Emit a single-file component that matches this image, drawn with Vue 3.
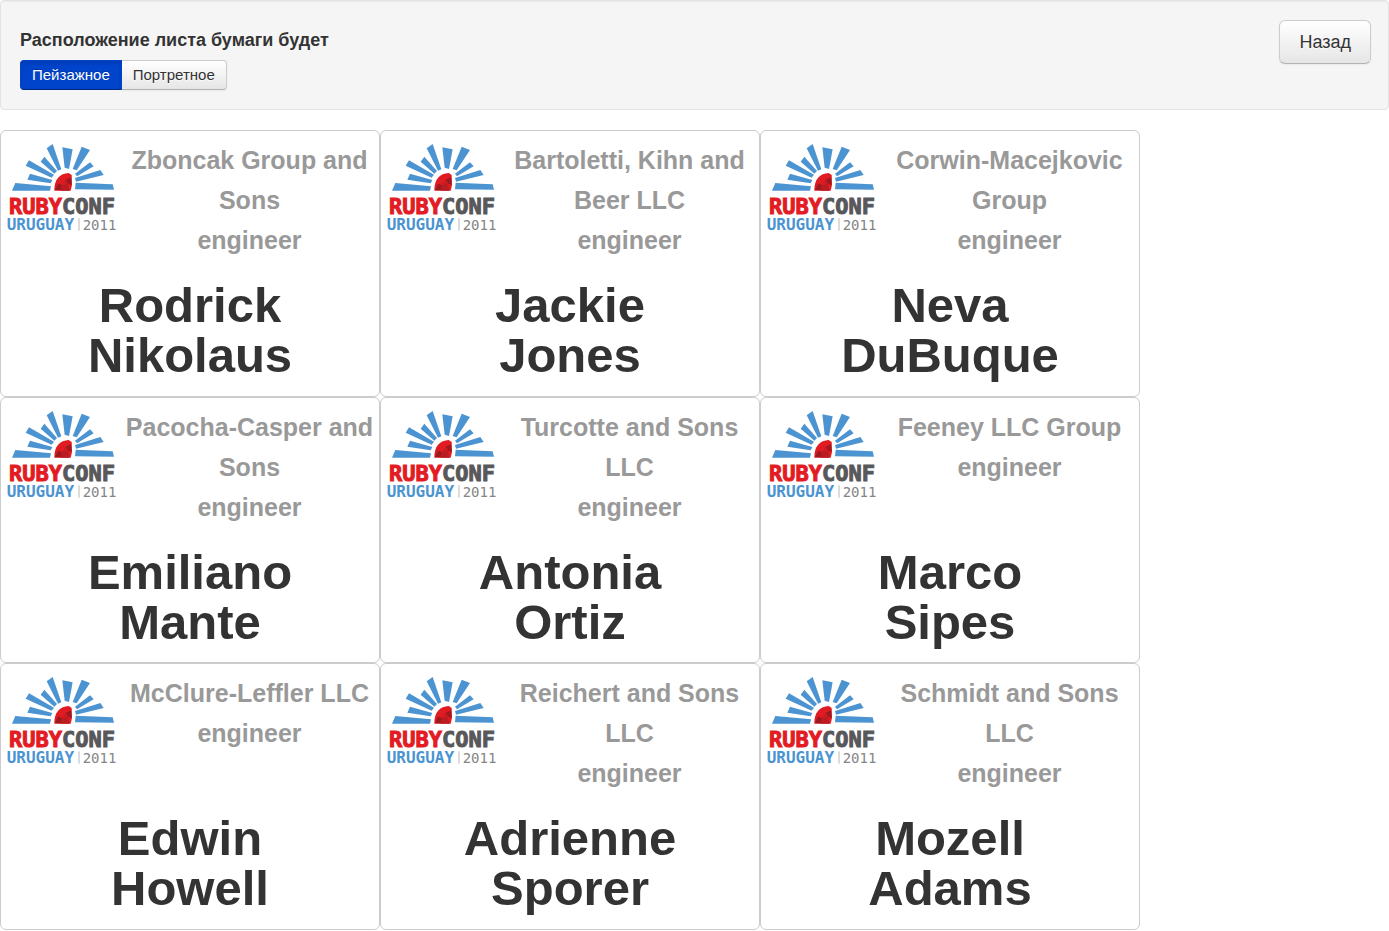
<script setup>
import { ref } from 'vue'

const orientation = ref('landscape')

const options = [
  { id: 'landscape', label: 'Пейзажное' },
  { id: 'portrait', label: 'Портретное' },
]

const badges = [
  { first: 'Rodrick', last: 'Nikolaus', company: 'Zboncak Group and Sons' },
  { first: 'Jackie', last: 'Jones', company: 'Bartoletti, Kihn and Beer LLC' },
  { first: 'Neva', last: 'DuBuque', company: 'Corwin-Macejkovic Group' },
  { first: 'Emiliano', last: 'Mante', company: 'Pacocha-Casper and Sons' },
  { first: 'Antonia', last: 'Ortiz', company: 'Turcotte and Sons LLC' },
  { first: 'Marco', last: 'Sipes', company: 'Feeney LLC Group' },
  { first: 'Edwin', last: 'Howell', company: 'McClure-Leffler LLC' },
  { first: 'Adrienne', last: 'Sporer', company: 'Reichert and Sons LLC' },
  { first: 'Mozell', last: 'Adams', company: 'Schmidt and Sons LLC' },
]
</script>

<template>
  <div class="page">
    <header class="well">
      <div>
        <h2 id="orientation-title" class="title">Расположение листа бумаги будет</h2>
        <div class="group" role="group" aria-labelledby="orientation-title">
          <button
            v-for="option in options"
            :key="option.id"
            type="button"
            class="btn"
            :class="{ active: orientation === option.id }"
            :aria-pressed="orientation === option.id"
            @click="orientation = option.id"
          >{{ option.label }}</button>
        </div>
      </div>
      <a href="#" class="btn back">Назад</a>
    </header>

    <main class="badges">
      <article v-for="badge in badges" :key="badge.last" class="badge">
        <div class="top">
          <svg class="logo" viewBox="21 24 333 270" role="img" aria-label="RubyConf Uruguay 2011">
            <g fill="#4b94d1">
              <path d="M46 144L153 154L150 167L36 167Z" />
              <path d="M90 116L157 135L152 145L82 134Z" />
              <path d="M87 76L162 119L155 128L77 92Z" />
              <path d="M133 65L171 108L163 116L122 80Z" />
              <path d="M158 27L184 103L174 107L140 40Z" />
              <path d="M187 37L218 43L207 102L194 98Z" />
              <path d="M245 35L270 45L230 106L218 102Z" />
              <path d="M270 82L281 94L231 124L225 116Z" />
              <path d="M301 105L311 120L228 140L225 129Z" />
              <path d="M227 143L338 148L342 164L225 163Z" />
            </g>
            <path d="M163 167C162 134 180 115 206 114L215 120L216 150L212 167Z" fill="#e01b22" />
            <path d="M197 134L213 127L215 149L204 146ZM174 146L186 150L183 166L165 165Z" fill="#9c1a1f" />
            <path d="M186 150L204 146L208 167L183 167Z" fill="#bb1c22" />
            <path d="M197 134L204 146L186 150Z" fill="#c91c22" />
            <text class="mark" x="27" y="238"><tspan fill="#e31b23" stroke="#e31b23">RUBY</tspan><tspan fill="#58585a" stroke="#58585a">CONF</tspan></text>
            <text class="sub" x="20" y="286" fill="#4b94d1">URUGUAY</text>
            <path d="M237 250V287" stroke="#999999" stroke-width="2" />
            <text class="year" x="248" y="286" fill="#858585">2011</text>
          </svg>
          <p class="company">{{ badge.company }}<br>engineer</p>
        </div>
        <h1 class="name">{{ badge.first }}<br>{{ badge.last }}</h1>
      </article>
    </main>
  </div>
</template>

<style>
body {
  margin: 0;
  background: #ffffff;
}
</style>

<style scoped>
.page {
  color: #333333;
  font-family: "Liberation Sans", Arial, sans-serif;
  font-size: 15px;
  line-height: 20px;
}

.well {
  display: flex;
  justify-content: space-between;
  align-items: flex-start;
  margin-bottom: 20px;
  padding: 19px 17px 19px 19px;
  border: 1px solid #e3e3e3;
  border-radius: 4px;
  background: #f5f5f5;
  box-shadow: inset 0 1px 1px rgba(0, 0, 0, 0.05);
}

.title {
  margin: 0;
  font-size: 18px;
  line-height: 40px;
}

.group {
  display: flex;
}

.btn {
  box-sizing: border-box;
  padding: 4px 11px;
  border: 1px solid #cccccc;
  border-color: #cccccc #cccccc #b3b3b3;
  background: linear-gradient(#ffffff, #e6e6e6);
  box-shadow: inset 0 1px 0 rgba(255, 255, 255, 0.2), 0 1px 2px rgba(0, 0, 0, 0.05);
  color: #333333;
  font: inherit;
  text-align: center;
  text-decoration: none;
  text-shadow: 0 1px 1px rgba(255, 255, 255, 0.75);
  cursor: pointer;
}

.group .btn:first-child {
  border-radius: 4px 0 0 4px;
}

.group .btn:last-child {
  margin-left: -1px;
  border-radius: 0 4px 4px 0;
}

.group .active {
  z-index: 1;
  border-color: #0044cc #0044cc #002a80;
  background: #0044cc;
  box-shadow: inset 0 2px 4px rgba(0, 0, 0, 0.15);
  color: #ffffff;
  text-shadow: 0 -1px 0 rgba(0, 0, 0, 0.25);
}

.back {
  padding: 11px 19px;
  border-radius: 6px;
  font-size: 18px;
}

.badges {
  display: grid;
  grid-template-columns: repeat(3, 380px);
  grid-auto-rows: 1fr;
  min-height: 800px;
}

.badge {
  box-sizing: border-box;
  padding: 9px 0 15px;
  border: 1px solid #cccccc;
  border-radius: 6px;
}

.top {
  display: flex;
  align-items: flex-start;
  min-height: 120px;
  margin-bottom: 20px;
}

.logo {
  flex: none;
  width: 111px;
  height: 90px;
  margin: 3px 2px 0 6px;
}

.company {
  flex: 1;
  margin: 0;
  color: #999999;
  font-size: 25px;
  font-weight: bold;
  line-height: 40px;
  text-align: center;
}

.name {
  margin: 0;
  font-size: 49px;
  line-height: 50px;
  text-align: center;
}

.mark,
.sub,
.year {
  font-family: "DejaVu Sans Mono", monospace;
  font-weight: bold;
}

.mark {
  font-size: 66px;
  stroke-width: 3px;
}

.sub {
  font-size: 48px;
}

.year {
  font-size: 42px;
  font-weight: normal;
}
</style>
